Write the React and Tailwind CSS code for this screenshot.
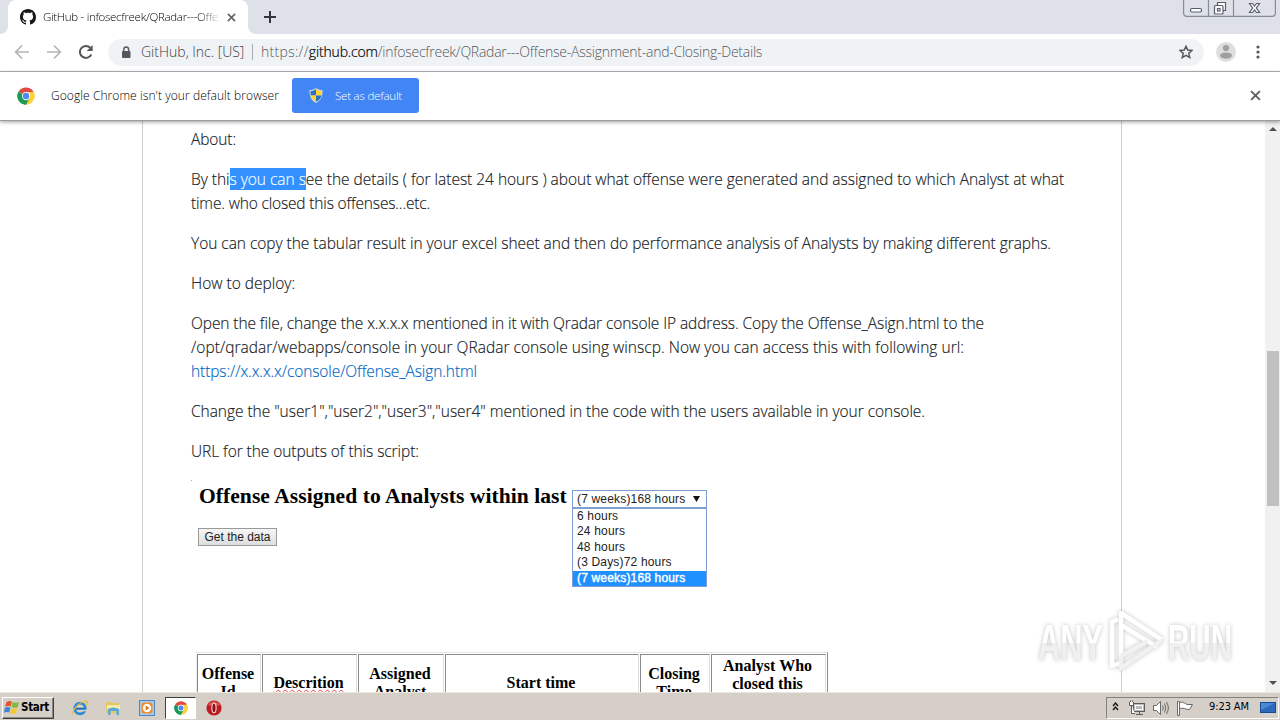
import React from "react";

function ChromeIcon({ size, className = "" }) {
  return (
    <svg width={size} height={size} viewBox="0 0 48 48" className={className}>
      <circle cx="24" cy="24" r="23" fill="#fff" />
      <path d="M24 24 L4.1 12.5 A23 23 0 0 1 43.9 12.5 Z" fill="#dd4b3e" />
      <path d="M24 24 L43.9 12.5 A23 23 0 0 1 24 47 Z" fill="#fdd03b" />
      <path d="M24 24 L24 47 A23 23 0 0 1 4.1 12.5 Z" fill="#1a9c57" />
      <path d="M24 13 H43.9 A23 23 0 0 1 45.5 32 L33.5 29.5 Z" fill="#fdd03b" />
      <path d="M4.1 12.5 L14.5 29.5 L24 35 L33.5 29.5 L24 47 A23 23 0 0 1 4.1 12.5Z" fill="#1a9c57" />
      <circle cx="24" cy="24" r="11" fill="#fff" />
      <circle cx="24" cy="24" r="8.6" fill="#4a8af4" />
    </svg>
  );
}

function CloseIcon({ size }) {
  return (
    <svg width={size} height={size} viewBox="0 0 10 10" stroke="#5f6368" strokeWidth="1.8">
      <path d="M1 1 L9 9 M9 1 L1 9" />
    </svg>
  );
}

function TabStrip() {
  return (
    <div className="relative flex h-[34px] shrink-0 bg-[#dee1e8] pl-2">
      <div className="relative flex h-full w-[240px] items-center rounded-t-lg bg-white pl-3">
        <svg className="absolute bottom-0 -left-2" width="8" height="8"><path d="M8 0 V8 H0 A8 8 0 0 0 8 0Z" fill="#fff" /></svg>
        <svg className="absolute -right-2 bottom-0" width="8" height="8"><path d="M0 0 V8 H8 A8 8 0 0 1 0 0Z" fill="#fff" /></svg>
        <svg width="16" height="16" viewBox="0 0 16 16" fill="#191717">
          <path d="M8 0C3.58 0 0 3.58 0 8c0 3.54 2.29 6.53 5.47 7.59.4.07.55-.17.55-.38 0-.19-.01-.82-.01-1.49-2.01.37-2.53-.49-2.69-.94-.09-.23-.48-.94-.82-1.13-.28-.15-.68-.52-.01-.53.63-.01 1.08.58 1.23.82.72 1.21 1.87.87 2.33.66.07-.52.28-.87.51-1.07-1.78-.2-3.64-.89-3.64-3.95 0-.87.31-1.59.82-2.15-.08-.2-.36-1.02.08-2.12 0 0 .67-.21 2.2.82.64-.18 1.32-.27 2-.27s1.36.09 2 .27c1.53-1.04 2.2-.82 2.2-.82.44 1.1.16 1.92.08 2.12.51.56.82 1.27.82 2.15 0 3.07-1.87 3.75-3.65 3.95.29.25.54.73.54 1.48 0 1.07-.01 1.93-.01 2.2 0 .21.15.46.55.38A8.01 8.01 0 0 0 16 8c0-4.42-3.58-8-8-8Z" />
        </svg>
        <span className="ml-[7px] w-[176px] overflow-hidden bg-gradient-to-r from-black from-88% to-[#20212420] bg-clip-text text-[11.5px] leading-5 tracking-[-0.3px] whitespace-nowrap text-transparent">
          GitHub - infosecfreek/QRadar---Offe
        </span>
        <span className="ml-2"><CloseIcon size={9} /></span>
      </div>
      <svg className="mt-[10px] ml-[15px]" width="14" height="14" stroke="#33363b" strokeWidth="2"><path d="M7 1 V13 M1 7 H13" /></svg>
      <svg className="absolute top-0 right-[3px]" width="94" height="18" fill="none" stroke="#858b99" strokeWidth="1.2">
        <path d="M0.6 0 V13 Q0.6 16.4 4 16.4 H89 Q92.4 16.4 92.4 13 V0 M25.5 0 V16 M50.5 0 V16" />
        <g stroke="#585e6c">
          <rect x="7.5" y="8.5" width="11" height="3.5" rx="1.5" fill="#fff" />
          <path d="M34.5 5.5 V2.5 H42.5 V10.5 H40" fill="#fff" />
          <rect x="31.5" y="5.5" width="8.5" height="8.5" rx="1" fill="#fff" />
          <rect x="34.5" y="8.5" width="2.5" height="2.5" />
          <path d="M66.5 3.5 h3 l2 2.5 l2-2.5 h3 l-3.2 4.5 l3.2 4.5 h-3 l-2-2.5 l-2 2.5 h-3 l3.2-4.5z" fill="#fff" />
        </g>
      </svg>
    </div>
  );
}

function Toolbar() {
  return (
    <div className="flex h-[38px] shrink-0 items-center border-b border-[#b5b7ba] bg-white pb-px pl-[14px]">
      <svg width="16" height="16" viewBox="0 0 16 16" fill="none" stroke="#b4b5b7" strokeWidth="1.7"><path d="M15 8 H2 M8 1.5 L1.7 8 L8 14.5" /></svg>
      <svg className="ml-4" width="16" height="16" viewBox="0 0 16 16" fill="none" stroke="#b4b5b7" strokeWidth="1.7"><path d="M1 8 H14 M8 1.5 L14.3 8 L8 14.5" /></svg>
      <svg className="ml-4" width="16" height="16" viewBox="0 0 16 16" fill="none" stroke="#54575b" strokeWidth="2"><path d="M13.3 10.5 A6 6 0 1 1 12.3 3.8" /><path d="M14.7 1 V7 H8.7 Z" fill="#54575b" stroke="none" /></svg>
      <div className="ml-[14px] flex h-[27px] w-[1096px] items-center rounded-full bg-[#f0f3f6] pr-[11px] pl-[13px] text-sm">
        <svg width="10" height="13" viewBox="0 0 10 13"><rect x="1" y="5" width="8.5" height="7" rx="1" fill="#54575b" /><path d="M2.8 5 V3.4 a2.4 2.4 0 0 1 4.8 0 V5" fill="none" stroke="#54575b" strokeWidth="1.4" /></svg>
        <span className="ml-[10px] w-[111px] whitespace-nowrap text-[#3c4043]">GitHub, Inc. [US]</span>
        <span className="h-4 w-px bg-[#a8abaf]" />
        <span className="ml-2 whitespace-nowrap text-[#54575b]">
          <span className="tracking-[0.3px]">https://</span>
          <span className="tracking-[-0.15px] text-black [-webkit-text-stroke:0.2px]">github.com</span>
          <span className="tracking-[-0.25px]">/infosecfreek/QRadar---Offense-Assignment-and-Closing-Details</span>
        </span>
        <svg className="ml-auto" width="14" height="14" viewBox="1 1 22 22" fill="none" stroke="#54575b" strokeWidth="2.3"><path d="M12 2.8 L14.7 9 L21.5 9.6 L16.3 14.1 L17.9 20.7 L12 17.2 L6.1 20.7 L7.7 14.1 L2.5 9.6 L9.3 9Z" /></svg>
      </div>
      <svg className="ml-3" width="20" height="20"><circle cx="10" cy="10" r="10" fill="#dededf" /><circle cx="10" cy="6" r="3.1" fill="#a0a0a1" /><ellipse cx="10" cy="13.6" rx="6" ry="3.2" fill="#a0a0a1" /></svg>
      <svg className="ml-5" width="4" height="14" fill="#54575b"><circle cx="2" cy="2" r="1.6" /><circle cx="2" cy="7" r="1.6" /><circle cx="2" cy="12" r="1.6" /></svg>
    </div>
  );
}

function InfoBar() {
  return (
    <div className="relative z-10 flex h-[49px] shrink-0 items-center border-b border-[#9c9c9c] bg-white pb-px pl-[17px] text-xs shadow-[0_1px_4px_rgba(0,0,0,0.4)]">
      <ChromeIcon size={18} />
      <span className="ml-4 w-[241px] tracking-[0.07px] whitespace-nowrap text-black">Google Chrome isn't your default browser</span>
      <button className="flex h-[35px] w-[127px] items-center rounded-[3px] bg-[#4285f4] pl-[17px] text-[11.5px] tracking-[-0.2px] text-white">
        <svg width="14" height="15" viewBox="0 0 14 15">
          <path d="M7 0 C9 1.5 11 2 13.5 2 C13.8 8 12 12.5 7 15 C2 12.5 .2 8 .5 2 C3 2 5 1.5 7 0Z" fill="#cfd8e4" />
          <path d="M7 1.2 C5 2.6 3.5 3 1.6 3 V7.5 H7Z" fill="#2d6fc4" />
          <path d="M7 1.2 C9 2.6 10.5 3 12.4 3 V7.5 H7Z" fill="#fbd52f" />
          <path d="M1.6 7.5 H7 V13.8 C3.6 12 2 10 1.6 7.5Z" fill="#fbd52f" />
          <path d="M12.4 7.5 H7 V13.8 C10.4 12 12 10 12.4 7.5Z" fill="#2d6fc4" />
        </svg>
        <span className="ml-3 whitespace-nowrap">Set as default</span>
      </button>
      <span className="mr-[19px] ml-auto"><CloseIcon size={11} /></span>
    </div>
  );
}

function HeaderCell({ className, children }) {
  return (
    <div className={`flex h-[58px] items-center justify-center border border-t-[#8a8a8a] border-r-[#dedede] border-b-[#dedede] border-l-[#8a8a8a] pr-[2px] text-center ${className}`}>
      <span>{children}</span>
    </div>
  );
}

function OutputFigure() {
  return (
    <div className="mt-[17px] font-['Liberation_Sans',sans-serif] text-xs font-normal text-[#222] [-webkit-text-stroke:0px]">
      <div className="h-[10px]"><div className="size-px bg-[#aaa]" /></div>
      <div className="flex h-[18px] items-center pl-2">
        <h2 className="w-[373px] pb-[5px] font-['Liberation_Serif',serif] text-[21.55px] font-bold tracking-[0.05px] whitespace-nowrap text-black">Offense Assigned to Analysts within last</h2>
        <div className="relative h-[18px] w-[135px] border border-[#7d9fd3] bg-white pl-1 leading-4 tracking-[0.17px]">
          <div className="flex items-center whitespace-nowrap">
            (7 weeks)168 hours
            <svg className="ml-[8px]" width="7" height="6"><path d="M0 0 H7 L3.5 6Z" fill="#111" /></svg>
          </div>
          <div className="absolute top-[17px] -left-px w-[135px] border border-[#7d9fd3] bg-white text-xs leading-[15.4px] [&>div]:pl-1">
            <div>6 hours</div>
            <div>24 hours</div>
            <div>48 hours</div>
            <div>(3 Days)72 hours</div>
            <div className="bg-[#1e90ff] text-white [-webkit-text-stroke:0.4px]">(7 weeks)168 hours</div>
          </div>
        </div>
      </div>
      <div className="mt-5 ml-[7px] flex h-[18px] w-[79px] items-center justify-center border border-[#999] bg-gradient-to-b from-[#f6f6f6] to-[#dedede] whitespace-nowrap">Get the data</div>
      <div className="mt-[106px] ml-[5px] flex w-[632px] gap-px border border-t-[#e4e4e4] border-r-[#8a8a8a] border-l-[#ececec] pt-px font-['Liberation_Serif',serif] text-base leading-[18px] font-bold text-black">
        <HeaderCell className="w-[64px]">Offense<br />Id</HeaderCell>
        <HeaderCell className="w-[95px]"><span className="underline decoration-[#f04040] decoration-wavy decoration-1 underline-offset-1">Descrition</span></HeaderCell>
        <HeaderCell className="w-[86px]">Assigned<br />Analyst</HeaderCell>
        <HeaderCell className="w-[194px]">Start time</HeaderCell>
        <HeaderCell className="w-[70px]">Closing<br />Time</HeaderCell>
        <HeaderCell className="w-[115px] pb-[17px]">Analyst Who<br />closed this</HeaderCell>
      </div>
    </div>
  );
}

function Watermark() {
  return (
    <svg className="absolute top-[485px] left-[1030px] drop-shadow-[0_0_2px_rgba(0,0,0,0.24)]" width="210" height="70" viewBox="0 0 210 70">
      <defs>
        <linearGradient id="wm" x1="0" x2="0" y1="0" y2="1"><stop offset="0.5" stopColor="#fff" /><stop offset="0.5" stopColor="#f0f0f0" /></linearGradient>
      </defs>
      <g fill="url(#wm)" fontFamily="'Liberation Sans', sans-serif" fontWeight="700" fontSize="50">
        <text x="8" y="54" textLength="65" lengthAdjust="spacingAndGlyphs">ANY</text>
        <text x="138" y="54" textLength="64" lengthAdjust="spacingAndGlyphs">RUN</text>
      </g>
      <g fill="none" strokeWidth="4.5" strokeLinejoin="round">
        <path d="M88 13 L82 16 V60 L90 57" stroke="#fff" />
        <path d="M91 50 V7 L132 34" stroke="#fff" />
        <path d="M91 19 L127 41" stroke="#fff" />
        <path d="M132 34 L91 62 V50 L118 35" stroke="#f1f1f1" />
      </g>
    </svg>
  );
}

function Page() {
  return (
    <div className="relative flex h-[571px] shrink-0 overflow-hidden bg-white">
      <div className="ml-[142px] w-[980px] shrink-0 border-x border-[#cfcfcf] pt-[6px] pl-12 text-[15.5px] leading-6 whitespace-nowrap text-[#15191d] [-webkit-text-stroke:0.15px] [&>p]:mb-4">
        <p className="tracking-[-0.1px]">About:</p>
        <p>
          <span className="tracking-[-0.028px]">By thi<span className="bg-[#3390ff] text-white">s you can s</span>ee the details ( for latest 24 hours ) about what offense were generated and assigned to which Analyst at what</span>
          <br />
          <span className="tracking-[-0.16px]">time. who closed this offenses...etc.</span>
        </p>
        <p className="tracking-[-0.035px]">You can copy the tabular result in your excel sheet and then do performance analysis of Analysts by making different graphs.</p>
        <p>How to deploy:</p>
        <p>
          <span className="tracking-[-0.09px]">Open the file, change the x.x.x.x mentioned in it with Qradar console IP address. Copy the Offense_Asign.html to the</span>
          <br />
          <span className="tracking-[0.032px]">/opt/qradar/webapps/console in your QRadar console using winscp. Now you can access this with following url:</span>
          <br />
          <a className="tracking-[-0.096px] text-[#0366c4]">https://x.x.x.x/console/Offense_Asign.html</a>
        </p>
        <p className="tracking-[-0.039px]">Change the "user1","user2","user3","user4" mentioned in the code with the users available in your console.</p>
        <p className="tracking-[-0.07px]">URL for the outputs of this script:</p>
        <OutputFigure />
      </div>
      <Watermark />
      <div className="ml-auto flex w-[15px] shrink-0 flex-col items-center bg-[#f1f1f1] pt-[6px]">
        <svg width="8" height="4"><path d="M0 4 L4 0 L8 4Z" fill="#505050" /></svg>
        <div className="mt-[220px] h-[155px] w-[12px] bg-[#c1c1c1]" />
        <svg className="mt-auto mb-[7px]" width="8" height="4"><path d="M0 0 L4 4 L8 0Z" fill="#505050" /></svg>
      </div>
    </div>
  );
}

function Taskbar() {
  return (
    <div className="flex h-[28px] shrink-0 items-center border-t border-[#ebe8e4] bg-[#d5cfc8] font-['DejaVu_Sans_Condensed','DejaVu_Sans',sans-serif] font-normal text-black">
      <button className="mt-[2px] ml-[2px] flex h-[22px] w-[52px] items-center border border-t-white border-r-[#404040] border-b-[#404040] border-l-white pl-[1px] text-[11.5px] font-bold tracking-[-0.3px] shadow-[inset_-1px_-1px_0_#8a8782]">
        <svg className="shrink-0" width="16" height="15" viewBox="0 0 16 15">
          <path d="M2.5 2 Q5.5 0 8 1.6 L6.7 6.6 Q4 5.4 1 7Z" fill="#e8572c" />
          <path d="M8.8 2 Q12 3.6 15 2 L13.6 7.2 Q10.5 8.6 7.5 7Z" fill="#7fbb3e" />
          <path d="M.8 8 Q4 6.3 6.4 7.7 L5.2 12.6 Q2.5 11.3 0 12.8Z" fill="#3c86d8" />
          <path d="M7.2 8 Q10.4 9.6 13.3 8.2 L12 13 Q9 14.8 6 13Z" fill="#f8c62f" />
        </svg>
        <span className="ml-[1px]">Start</span>
      </button>
      <svg className="mt-[2px] ml-[18px]" width="16" height="16" viewBox="0 0 16 16" fill="none">
        <circle cx="8" cy="8.5" r="5.3" stroke="#2b8bd6" strokeWidth="2.8" />
        <path d="M3.5 8.7 H12.7" stroke="#1b6cb8" strokeWidth="2" />
        <path d="M10.5 10.6 H15" stroke="#d5cfc8" strokeWidth="1.6" />
        <path d="M1.3 14.6 C-1 12 6 2 14.3 1 C16 1.3 15 4 14 5.5" stroke="#e9bd33" strokeWidth="1.2" />
      </svg>
      <svg className="mt-[2px] ml-[17px]" width="16" height="16" viewBox="0 0 16 16">
        <path d="M1 2.5 L6 1.5 L7 3 H14 V13 H1Z" fill="#e3c765" />
        <path d="M2 5 H15 V9 H2Z" fill="#f8e9a8" />
        <path d="M3 9 Q8 6 14 9 V15 H11.5 V11 H5.5 V15 H3Z" fill="#5aa9dc" />
      </svg>
      <svg className="mt-[2px] ml-[18px]" width="16" height="16" viewBox="0 0 16 16">
        <rect x="0.5" y="0.5" width="15" height="15" fill="#a5cbee" stroke="#4b86c4" />
        <rect x="2.5" y="2.5" width="11" height="11" rx="2.5" fill="#f58a1f" />
        <circle cx="8" cy="8" r="4.2" fill="#fff" />
        <path d="M6.6 5.5 L10.6 8 L6.6 10.5Z" fill="#e8730f" />
      </svg>
      <div className="mt-[2px] ml-[10px] flex h-[22px] w-[31px] items-center justify-center border border-t-[#404040] border-r-white border-b-white border-l-[#404040] bg-white">
        <ChromeIcon size={14} />
      </div>
      <svg className="mt-[2px] ml-[10px]" width="16" height="16" viewBox="0 0 16 16">
        <circle cx="8" cy="8" r="7.6" fill="#bd1c20" />
        <path d="M2 5 A7 7 0 0 1 14 5 Q8 7 2 5Z" fill="#dc5a57" />
        <ellipse cx="8" cy="8" rx="2.1" ry="4.8" fill="#8c0d12" stroke="#f4dede" strokeWidth="1.1" />
      </svg>
      <div className="mt-[2px] mr-px ml-auto flex h-[22px] w-[173px] items-center border border-t-[#85827d] border-r-white border-b-white border-l-[#85827d] pl-[5px] text-[11px]">
        <svg width="7" height="12" fill="none" stroke="#111" strokeWidth="1.3"><path d="M1 4 L3.5 1 L6 4 M1 8 L3.5 5 L6 8" /></svg>
        <svg className="ml-[10px]" width="16" height="16" viewBox="0 0 16 16" fill="none" stroke="#5c5c5c">
          <rect x="4.5" y="3.5" width="11" height="8" fill="#bbb" /><rect x="6.5" y="5.5" width="7" height="4" stroke="#fff" />
          <path d="M7 14.5 H14 M10.5 12 V14" />
          <path d="M0.5 2 V5.5 H4.5 V2 M2.5 5.5 V13.5 H6 M1.5 0.5 V2 M3.5 0.5 V2" fill="#fff" />
        </svg>
        <svg className="ml-[8px]" width="17" height="16" viewBox="0 0 17 16" fill="none" stroke="#6a6a6a">
          <path d="M0.5 5.5 H3.5 L7.5 1.5 V14.5 L3.5 10.5 H0.5Z" fill="#fff" />
          <path d="M9.5 5.5 Q11 8 9.5 10.5 M11.5 3.5 Q14 8 11.5 12.5 M13.5 2 Q17.2 8 13.5 14" />
        </svg>
        <svg className="ml-[7px]" width="16" height="16" viewBox="0 0 16 16" stroke="#6a6a6a">
          <path d="M0.5 1.5 H2.5 V15.5 H0.5Z" fill="#fff" />
          <path d="M2.5 2.5 Q5.5 1.5 7.5 3 L10 4.5 H15.5 L12.5 9.5 Q9 9.5 7.5 8.5 Q5 7.5 2.5 9Z" fill="#fff" />
        </svg>
        <span className="ml-[16px] w-[51px] tracking-[-0.1px] whitespace-nowrap">9:23 AM</span>
        <svg width="16" height="14" viewBox="0 0 16 14">
          <rect x="0.5" y="1.5" width="15" height="10" fill="#2c69bd" stroke="#194a94" />
          <path d="M1 2 H15 L1 9Z" fill="#4a8ad4" />
          <rect x="4" y="12" width="6" height="1.5" fill="#ccd9ea" />
        </svg>
      </div>
    </div>
  );
}

export default function App() {
  return (
    <div className="flex h-[720px] w-[1280px] flex-col overflow-hidden bg-white font-['Open_Sans','Noto_Sans',sans-serif] font-light">
      <TabStrip />
      <Toolbar />
      <InfoBar />
      <Page />
      <Taskbar />
    </div>
  );
}
